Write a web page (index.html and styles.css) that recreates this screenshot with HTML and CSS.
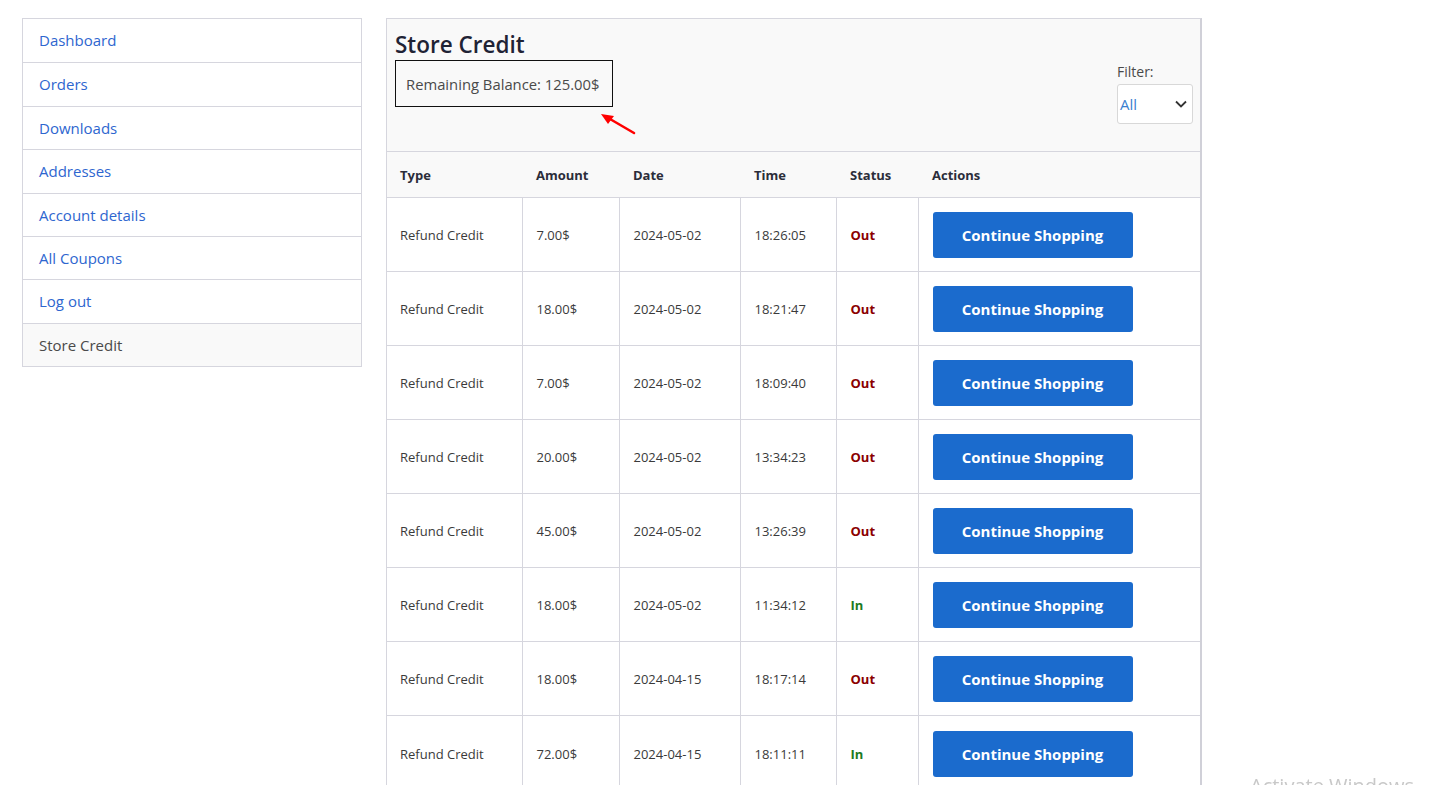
FILE: index.html
```html
<!DOCTYPE html>
<html lang="en">
<head>
<meta charset="utf-8">
<title>Store Credit</title>
<link rel="stylesheet" href="styles.css">
</head>
<body>
<div class="page">
  <nav class="side-nav">
    <a class="nav-item" href="#">Dashboard</a>
    <a class="nav-item" href="#">Orders</a>
    <a class="nav-item" href="#">Downloads</a>
    <a class="nav-item" href="#">Addresses</a>
    <a class="nav-item" href="#">Account details</a>
    <a class="nav-item" href="#">All Coupons</a>
    <a class="nav-item" href="#">Log out</a>
    <a class="nav-item active" href="#">Store Credit</a>
  </nav>

  <main class="panel">
    <div class="panel-head">
      <div class="head-left">
        <h2 class="title">Store Credit</h2>
        <div class="balance">Remaining Balance: 125.00$</div>
        <svg class="arrow" width="44" height="28" viewBox="0 0 44 28">
          <line x1="35" y1="20" x2="11" y2="6" stroke="#ff0000" stroke-width="2.6" stroke-linecap="round"/>
          <polygon points="2,1 15,3 9,11" fill="#ff0000"/>
        </svg>
      </div>
      <div class="filter">
        <label class="filter-label">Filter:</label>
        <div class="select">
          <span class="select-value">All</span>
          <svg width="12" height="8" viewBox="0 0 12 8"><path d="M1 1.5 L6 6.5 L11 1.5" fill="none" stroke="#333" stroke-width="1.8"/></svg>
        </div>
      </div>
    </div>

    <table class="credit-table">
      <thead>
        <tr>
          <th class="c-type">Type</th>
          <th class="c-amount">Amount</th>
          <th class="c-date">Date</th>
          <th class="c-time">Time</th>
          <th class="c-status">Status</th>
          <th class="c-actions">Actions</th>
        </tr>
      </thead>
      <tbody>
        <tr><td>Refund Credit</td><td>7.00$</td><td>2024-05-02</td><td>18:26:05</td><td><span class="out">Out</span></td><td><button class="btn">Continue Shopping</button></td></tr>
        <tr><td>Refund Credit</td><td>18.00$</td><td>2024-05-02</td><td>18:21:47</td><td><span class="out">Out</span></td><td><button class="btn">Continue Shopping</button></td></tr>
        <tr><td>Refund Credit</td><td>7.00$</td><td>2024-05-02</td><td>18:09:40</td><td><span class="out">Out</span></td><td><button class="btn">Continue Shopping</button></td></tr>
        <tr><td>Refund Credit</td><td>20.00$</td><td>2024-05-02</td><td>13:34:23</td><td><span class="out">Out</span></td><td><button class="btn">Continue Shopping</button></td></tr>
        <tr><td>Refund Credit</td><td>45.00$</td><td>2024-05-02</td><td>13:26:39</td><td><span class="out">Out</span></td><td><button class="btn">Continue Shopping</button></td></tr>
        <tr><td>Refund Credit</td><td>18.00$</td><td>2024-05-02</td><td>11:34:12</td><td><span class="in">In</span></td><td><button class="btn">Continue Shopping</button></td></tr>
        <tr><td>Refund Credit</td><td>18.00$</td><td>2024-04-15</td><td>18:17:14</td><td><span class="out">Out</span></td><td><button class="btn">Continue Shopping</button></td></tr>
        <tr class="last"><td>Refund Credit</td><td>72.00$</td><td>2024-04-15</td><td>18:11:11</td><td><span class="in">In</span></td><td><button class="btn">Continue Shopping</button></td></tr>
      </tbody>
    </table>
  </main>
</div>
<div class="watermark">Activate Windows</div>
</body>
</html>
```

FILE: styles.css
```css
html, body {
  margin: 0;
  padding: 0;
  background: #ffffff;
  overflow: hidden;
  height: 785px;
}
body {
  font-family: "Open Sans", "Noto Sans", sans-serif;
  color: #3a3a3a;
}
.page {
  display: flex;
  align-items: flex-start;
  gap: 24px;
  padding: 18px 0 0 22px;
}

/* Sidebar */
.side-nav {
  width: 340px;
  display: flex;
  flex-direction: column;
  border: 1px solid #d6d6de;
  box-sizing: border-box;
}
.nav-item {
  display: block;
  height: 43.4px;
  line-height: 43px;
  padding: 0 16px;
  font-size: 15px;
  color: #2e66cf;
  text-decoration: none;
  border-top: 1px solid #d6d6de;
  box-sizing: border-box;
}
.nav-item:first-child { border-top: none; }
.nav-item.active {
  color: #4a4a4a;
  background: #f9f9f9;
}

/* Panel */
.panel {
  width: 816px;
  box-sizing: border-box;
  border: 1px solid #d6d6de;
  border-right: 2px solid #d0d0d8;
  background: #f9f9f9;
}
.panel-head {
  display: flex;
  justify-content: space-between;
  align-items: flex-start;
  padding: 10px 7px 0 8px;
  height: 133px;
  box-sizing: border-box;
  border-bottom: 1px solid #d6d6de;
}
.head-left {
  position: relative;
}
.title {
  margin: 0;
  font-size: 22.5px;
  font-weight: 600;
  line-height: 31px;
  color: #1f2335;
}
.balance {
  display: inline-block;
  padding: 0 10px;
  height: 47px;
  line-height: 46px;
  width: 218px;
  box-sizing: border-box;
  border: 1px solid #111;
  font-size: 14.8px;
  color: #4a4a4a;
  white-space: nowrap;
}
.arrow {
  position: absolute;
  left: 204px;
  top: 84px;
}
.filter {
  display: flex;
  flex-direction: column;
  padding-top: 33px;
}
.filter-label {
  font-size: 14px;
  color: #4a4a4a;
  line-height: 20px;
  margin-bottom: 2px;
}
.select {
  width: 76px;
  height: 40px;
  box-sizing: border-box;
  border: 1px solid #d8d8d8;
  border-radius: 3px;
  background: #fff;
  display: flex;
  align-items: center;
  justify-content: space-between;
  padding: 0 5px 0 2px;
}
.select-value {
  font-size: 15px;
  color: #3a7fd0;
}

/* Table */
.credit-table {
  width: 100%;
  table-layout: fixed;
  border-collapse: collapse;
  font-size: 13px;
}
.credit-table th,
.credit-table td {
  box-sizing: border-box;
}
.credit-table th {
  height: 45px;
  text-align: left;
  font-weight: 700;
  color: #2b2d3a;
  padding: 1px 14px 0;
  background: #f9f9f9;
  border-bottom: 1px solid #d6d6de;
}
.credit-table th:first-child { padding-left: 13px; }
.c-type { width: 135px; }
.c-amount { width: 97px; }
.c-date { width: 121px; }
.c-time { width: 96px; }
.c-status { width: 82px; }
.credit-table td {
  height: 74px;
  padding: 2px 14px 0;
  background: #fff;
  border-bottom: 1px solid #d6d6de;
  border-left: 1px solid #d6d6de;
  color: #3a3a3a;
}
.credit-table td:first-child { border-left: none; padding-left: 13px; }
.credit-table tr.last td { height: 76px; border-bottom: none; }
.out { color: #8b0000; font-weight: 700; }
.in { color: #1e7a1e; font-weight: 700; }
.btn {
  width: 200px;
  height: 46px;
  border: none;
  border-radius: 3px;
  background: #1b6bcd;
  color: #fff;
  font-family: "Open Sans", "Noto Sans", sans-serif;
  font-size: 15px;
  font-weight: 700;
  cursor: pointer;
}

.watermark {
  position: fixed;
  left: 1250px;
  top: 772px;
  font-family: "Open Sans", sans-serif;
  font-size: 20px;
  color: #c8c8c8;
  white-space: nowrap;
}
```
